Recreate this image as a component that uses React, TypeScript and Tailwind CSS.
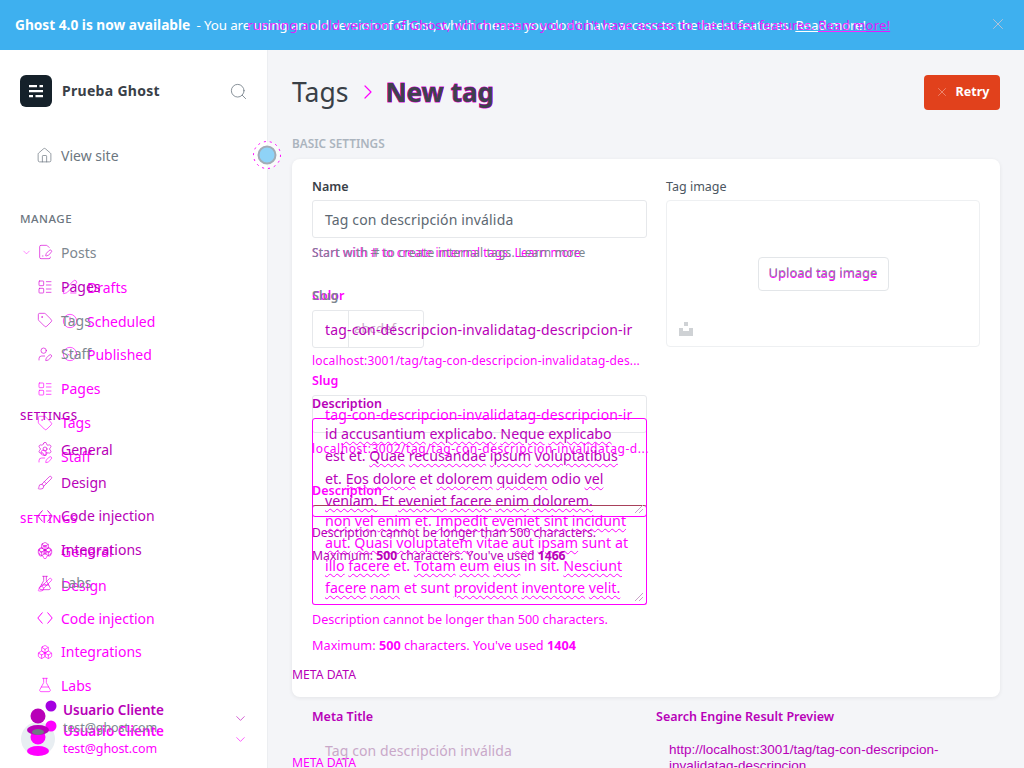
import React from 'react';
import {
  Boxes, Brush, ChevronDown, ChevronRight, CircleCheck, Clock, FilePenLine, FlaskConical,
  House, LayoutList, PenLine, Search, Settings, Tag, UserPen, X,
} from 'lucide-react';

const MAGENTA = 'text-[#ff00ff]';
const PURPLE = 'text-[#b800b8]';
const GRAY = 'text-[#7d8790]';

type NavItem = { label: string; icon: React.ElementType; color?: string };

const CodeIcon: React.FC<{ className?: string }> = ({ className }) => (
  <svg width="16" height="16" viewBox="0 0 16 16" fill="none" stroke="currentColor" className={className}>
    <path d="M5.500 2.500 .8 8l4.700 5.500M10.500 2.500 15.200 8l-4.700 5.500" />
  </svg>
);

const NavRow: React.FC<NavItem & { sub?: boolean; h?: string }> = ({ label, icon: Icon, color = MAGENTA, sub, h = 'h-[33.4px]' }) => (
  <div className={`flex items-center ${h} ${sub ? 'pl-[62px] gap-[9px]' : 'pl-[37px] gap-[8px]'} ${color} text-[14px]`}>
    <Icon size={16} strokeWidth={1} className={`shrink-0 ${color === MAGENTA ? MAGENTA : 'text-[#d800d8]'}`} />
    <span>{label}</span>
  </div>
);

const SideLabel: React.FC<{ className?: string; children: React.ReactNode }> = ({ className, children }) => (
  <div className={`pl-[20px] h-4 leading-4 text-[11.5px] font-medium tracking-[0.5px] ${className}`}>{children}</div>
);

// avatar blob + name, the same drawing for both states
const UserBlock: React.FC<{ second?: boolean; head: string; dot: string }> = ({ second, head, dot }) => (
  <div className="flex items-start">
    <svg width="60" height="48" viewBox="0 0 60 48" className="shrink-0 mr-[3px]">
      {second && <circle cx="38" cy="21" r="17" fill="#e8eef2" />}
      <circle cx="51" cy={second ? 8 : 9} r="5.5" fill={dot} />
      <circle cx="38" cy="19" r="7.5" fill={head} />
      <ellipse cx="38" cy="33" rx="11" ry="5" fill={head} />
      {!second && <ellipse cx="38" cy="35" rx="6" ry="3" fill="#6f7a84" />}
    </svg>
    <div className="pt-[4px]">
      <div className={`text-[13.5px] leading-[18px] font-semibold ${second ? MAGENTA : PURPLE}`}>Usuario Cliente</div>
      <div className={`text-[12.5px] leading-[18px] tracking-[-0.1px] ${second ? MAGENTA : GRAY}`}>test@ghost.com</div>
    </div>
  </div>
);

const SPELL = 'underline decoration-wavy decoration-1 underline-offset-2 decoration-[#ff00ff]';

// words that start with ~ get the spell checker squiggle
const Line: React.FC<{ text: string }> = ({ text }) => (
  <div className="h-[22.3px] leading-[22.3px] whitespace-nowrap">
    {text.split(' ').map((w, i) => (
      <React.Fragment key={i}>
        {i > 0 && ' '}
        {w.startsWith('~') ? <span className={SPELL}>{w.slice(1)}</span> : w}
      </React.Fragment>
    ))}
  </div>
);

const Resize: React.FC = () => (
  <svg width="10" height="10" viewBox="0 0 10 10" className="absolute right-[2px] bottom-[2px]">
    <path d="M1 9 9 1M5 9 9 5" stroke="#c8a0c8" strokeWidth="1" />
  </svg>
);

const TextBox: React.FC<{ lines: string[]; color: string; top?: string; h: string }> = ({ lines, color, top, h }) => (
  <div className={`relative ${h} border border-[#ff00ff] ${top ?? ''} rounded-[3px] pl-[12px] pt-[4px] overflow-hidden text-[14.2px] ${color}`}>
    {lines.map(l => <Line key={l} text={l} />)}
    <Resize />
  </div>
);

const Banner: React.FC = () => (
  <div className="relative h-[50px] bg-[#3eb0ef] flex items-center pl-[15px] text-[13.4px] text-white">
    <p className="whitespace-nowrap">
      <b className="font-bold text-[13.7px]">Ghost 4.0 is now available</b>
      <span className="pl-[3px] tracking-[-0.15px]"> - You are using an old version of Ghost, which means you don't have access to the latest features. <u>Read more!</u></span>
    </p>
    {/* second state of the same notice, lying over the first */}
    <p className="absolute left-[10px] whitespace-nowrap text-[#ff00ff]/85">
      <b className="font-bold text-[13.7px] text-transparent">Ghost 4.0 is now available</b><span className="text-transparent"> - You are </span>running an old version of Ghost, which means you don't have access to the latest features. <u>Read more!</u>
    </p>
    <X size={18} strokeWidth={1} className="absolute left-[989px] top-[15px] text-[#d8c8d0]" />
  </div>
);

const Sidebar: React.FC = () => (
  <aside className="relative z-10 w-[268px] shrink-0 bg-white border-r border-[#eceef1] h-[718px] overflow-hidden">
    <div className="flex items-center pt-[25px] pl-[20px]">
      <svg width="32" height="32" viewBox="0 0 32 32" className="shrink-0">
        <rect width="32" height="32" rx="6" fill="#15212a" />
        <path d="M9 10h8v2.2H9zM19.500 10h3.500v2.200h-3.500zM9 15h14v2.200H9zM9 20h4v2.200H9zM15.500 20H23v2.200h-7.500z" fill="#fff" />
      </svg>
      <span className="ml-[10px] -mt-[2px] text-[14px] font-bold tracking-[0.3px] text-[#394047]">Prueba Ghost</span>
      <Search size={19} strokeWidth={1} className="ml-auto mr-[19px] text-[#6b7680]" />
    </div>
    <div className="mt-[32px] flex items-center h-[33.500px] pl-[36px] gap-[8px] text-[14px] text-[#6c7680]">
      <House size={17} strokeWidth={1} />
      <span>View site</span>
    </div>
    <SideLabel className="mt-[38px] text-[#6c7680]">MANAGE</SideLabel>
    <div className="mt-[9px] relative">
      <ChevronDown size={11} strokeWidth={1} className={`absolute left-[21px] top-[11px] ${MAGENTA}`} />
      <NavRow label="Posts" icon={FilePenLine} color={GRAY} h="h-[33.5px]" />
    </div>
    <NavRow label="Drafts" icon={PenLine} sub h="h-[36px]" />
    <NavRow label="Scheduled" icon={Clock} sub h="h-[32px]" />
    <NavRow label="Published" icon={CircleCheck} sub h="h-[34px]" />
    <NavRow label="Pages" icon={LayoutList} h="h-[35px]" />
    <NavRow label="Tags" icon={Tag} h="h-[33px]" />
    <NavRow label="Staff" icon={UserPen} h="h-[34px]" />
    <SideLabel className={`mt-[38px] ${MAGENTA}`}>SETTINGS</SideLabel>
    <div className="mt-[8px]">
      <NavRow label="General" icon={Settings} />
      <NavRow label="Design" icon={Brush} />
      <NavRow label="Code injection" icon={CodeIcon} />
      <NavRow label="Integrations" icon={Boxes} />
      <NavRow label="Labs" icon={FlaskConical} />
    </div>
    <div className="mt-[16px] relative">
      <UserBlock second head="#ff00ff" dot="#ff00ff" />
      <ChevronDown size={15} strokeWidth={1} className={`absolute left-[233px] top-[14px] ${MAGENTA}`} />
    </div>
    {/* first state of the sidebar, lying over the second */}
    <div className="absolute left-0 top-[220px] w-full">
      <NavRow label="Pages" icon={LayoutList} color={PURPLE} h="h-[33.5px]" />
      <NavRow label="Tags" icon={Tag} color={GRAY} h="h-[33.5px]" />
      <NavRow label="Staff" icon={UserPen} color={GRAY} h="h-[33.5px]" />
      <SideLabel className={`mt-[37px] ${PURPLE}`}>SETTINGS</SideLabel>
      <div className="mt-[9px]">
        <NavRow label="General" icon={Settings} color={PURPLE} />
        <NavRow label="Design" icon={Brush} color={PURPLE} />
        <NavRow label="Code injection" icon={CodeIcon} color={PURPLE} />
        <NavRow label="Integrations" icon={Boxes} color={PURPLE} />
        <NavRow label="Labs" icon={FlaskConical} color={GRAY} />
      </div>
      <div className="mt-[98px] relative">
        <UserBlock head="#b800b8" dot="#a400e0" />
        <ChevronDown size={15} strokeWidth={1} className={`absolute left-[233px] top-[14px] ${PURPLE}`} />
      </div>
    </div>
  </aside>
);

const inputCls = 'h-[38px] border border-[#e6e8eb] rounded-[3px] bg-white flex items-center pl-[12px] text-[14px] tracking-[0.15px]';
const labelCls = 'h-[14px] leading-[14px] text-[12.500px] font-semibold';

const Main: React.FC = () => (
  <main className="relative flex-1 bg-[#f4f5f8] px-[24px] h-[718px] overflow-hidden">
    <div className="flex items-center justify-between pt-[24px]">
      <h1 className="flex items-center text-[26.500px] leading-[35px] text-[#394047]">
        <span className="mt-[1px]">Tags</span>
        <ChevronRight size={24} strokeWidth={1.2} className={`ml-[8px] mr-[5px] ${MAGENTA}`} />
        <span className="relative mt-[1px] text-[26px] font-bold [-webkit-text-stroke:1px_#e000e0]">
          New tag
          <span className="absolute left-0 top-0 font-bold text-[#40404e] [-webkit-text-stroke:0px]">New tag</span>
        </span>
      </h1>
      <button className="h-[35px] w-[76px] rounded-[4px] bg-[#e1411c] flex items-center justify-center gap-[7px] text-[12.5px] font-bold text-white">
        <X size={14} strokeWidth={1} className="text-[#f5b5a5]" />
        Retry
      </button>
    </div>
    <div className="mt-[25px] h-[16px] leading-[16px] text-[11.8px] font-semibold text-[#abb4be]">BASIC SETTINGS</div>
    <div className="mt-[8px] h-[538px] bg-white rounded-[8px] shadow-[0_1px_4px_rgba(0,0,0,0.07)] p-[20px] grid grid-cols-[335px_314px] gap-x-[19px] items-start">
      {/* second state of the form, this one gives the card its height */}
      <div>
        <div className={`mt-[1px] ${labelCls} font-medium text-[#394047]`}>Name</div>
        <div className={`mt-[6px] ${inputCls} text-[#5d6872]`}>Tag con descripción inválida</div>
        <div className={`mt-[7px] h-[16px] leading-[16px] text-[12px] tracking-[0.1px] ${MAGENTA}`}>Start with # to create internal tags. Learn more</div>
        <div className={`mt-[28px] ${labelCls} ${MAGENTA}`}>Color</div>
        <div className={`mt-[7px] w-[112px] ${inputCls} !pl-0 text-[#c8a8c8]`}>
          <span className="w-[36px] h-full border-r border-[#e6e8eb]" />
          <span className="pl-[5px] text-[13px]">abcdef</span>
        </div>
        <div className={`mt-[26px] ${labelCls} ${MAGENTA}`}>Slug</div>
        <div className={`mt-[7px] ${inputCls} ${MAGENTA} whitespace-nowrap overflow-hidden`}>tag-con-descripcion-invalidatag-descripcion-ir</div>
        <div className={`mt-[8px] h-[16px] leading-[16px] text-[12px] tracking-[0.55px] whitespace-nowrap ${MAGENTA}`}>localhost:3002/tag/tag-con-descripcion-invalidatag-d...</div>
        <div className={`mt-[27px] ${labelCls} ${MAGENTA}`}>Description</div>
        <TextBox
          color={MAGENTA}
          top="mt-[7px] border-t-[#a8405a]"
          h="h-[100px]"
          lines={[
            '~non ~vel ~enim et. ~Impedit ~eveniet ~sint ~incidunt',
            '~aut. ~Quasi ~voluptatem vitae ~aut ~ipsam sunt at',
            '~illo ~facere et. ~Totam ~eum ~eius in sit. ~Nesciunt',
            '~facere ~nam et sunt ~provident ~inventore ~velit.',
          ]}
        />
        <div className={`mt-[7px] h-[16px] leading-[16px] text-[12.6px] ${MAGENTA}`}>Description cannot be longer than 500 characters.</div>
        <div className={`mt-[9px] h-[16px] leading-[16px] text-[12.7px] ${MAGENTA}`}>Maximum: <b>500</b> characters. You've used <b>1404</b></div>
      </div>
      <div>
        <div className={`mt-[1px] ${labelCls} !font-normal text-[#4c5661]`}>Tag image</div>
        <div className="relative mt-[6px] h-[147px] border border-[#eef0f2] rounded-[4px] flex items-center justify-center">
          <span className="relative h-[34px] w-[131px] border border-[#e3e6e9] rounded-[4px] flex items-center justify-center text-[13px] text-[#ff00ff]">
            Upload tag image
            <span className="absolute inset-0 -translate-y-[1px] flex items-center justify-center text-[#7d8790]/80">Upload tag image</span>
          </span>
          <svg width="14" height="14" viewBox="0 0 14 14" className="absolute left-[12px] bottom-[10px]">
            <path d="M5 0h4v4H5zM0 6h4v3h6V6h4v8H0z" fill="#cfd2d5" />
          </svg>
        </div>
      </div>
    </div>
    <div className={`mt-[58px] h-[16px] leading-[16px] text-[12.2px] ${MAGENTA}`}>META DATA</div>

    {/* first state of the form, lying over the second */}
    <div className="absolute left-[24px] top-[195px] w-[708px]">
      <div className="pl-[20px] w-[355px]">
        <div className={`h-[16px] leading-[16px] text-[12px] tracking-[0.2px] ${GRAY}`}>Start with # to create internal tags. Learn more</div>
        <div className={`mt-[28px] ${labelCls} ${GRAY}`}>Slug</div>
        <div className={`mt-[7px] ${inputCls} !bg-transparent !border-transparent ${PURPLE} whitespace-nowrap overflow-hidden`}>tag-con-descripcion-invalidatag-descripcion-ir</div>
        <div className={`mt-[5px] h-[16px] leading-[16px] text-[12px] tracking-[0.15px] whitespace-nowrap ${MAGENTA}`}>localhost:3001/tag/tag-con-descripcion-invalidatag-des...</div>
        <div className={`mt-[28px] ${labelCls} ${PURPLE}`}>Description</div>
        <TextBox
          color={PURPLE}
          top="mt-[7px]"
          h="h-[99px]"
          lines={[
            'id ~accusantium ~explicabo. ~Neque ~explicabo',
            'est et. ~Quae ~recusandae ~ipsum ~voluptatibus',
            'et. ~Eos ~dolore et ~dolorem ~quidem odio ~vel',
            '~veniam. Et ~eveniet ~facere ~enim ~dolorem.',
          ]}
        />
        <div className={`mt-[8px] h-[16px] leading-[16px] text-[12.1px] ${PURPLE}`}>Description cannot be longer than 500 characters.</div>
        <div className={`mt-[7px] h-[16px] leading-[16px] text-[12.2px] ${PURPLE}`}>Maximum: <b>500</b> characters. You've used <b>1466</b></div>
      </div>
      <div className={`mt-[103px] h-[16px] leading-[16px] text-[12.2px] ${PURPLE}`}>META DATA</div>
      <div className="mt-[27px] grid grid-cols-[344px_1fr] pl-[20px]">
        <div>
          <div className={`${labelCls} ${PURPLE}`}>Meta Title</div>
          <div className="mt-[16px] pl-[13px] text-[14px] tracking-[0.1px] text-[#c9a8c9] whitespace-nowrap">Tag con descripción inválida</div>
        </div>
        <div>
          <div className={`${labelCls} ${PURPLE}`}>Search Engine Result Preview</div>
          <div className={`mt-[18px] pl-[13px] w-[300px] font-['Liberation_Sans',Arial,sans-serif] text-[13.5px] leading-[16px] ${PURPLE}`}>
            http://localhost:3001/tag/tag-con-descripcion-invalidatag-descripcion
          </div>
        </div>
      </div>
    </div>
  </main>
);

const App: React.FC = () => (
  <div className="relative w-[1024px] h-[768px] overflow-hidden bg-white font-['Noto_Sans','Open_Sans',sans-serif]">
    <Banner />
    <div className="flex">
      <Sidebar />
      <Main />
    </div>
    {/* notification bubble sits across the sidebar edge */}
    <svg width="32" height="32" viewBox="0 0 32 32" className="absolute left-[251px] top-[139px] z-20">
      <circle cx="16" cy="16" r="13.500" fill="#fff" fillOpacity="0.6" stroke="#ff00ff" strokeDasharray="2 4" />
      <circle cx="16" cy="16" r="8.500" fill="#8fd3f7" stroke="#a2adb6" strokeWidth="2" />
    </svg>
  </div>
);

export default App;
